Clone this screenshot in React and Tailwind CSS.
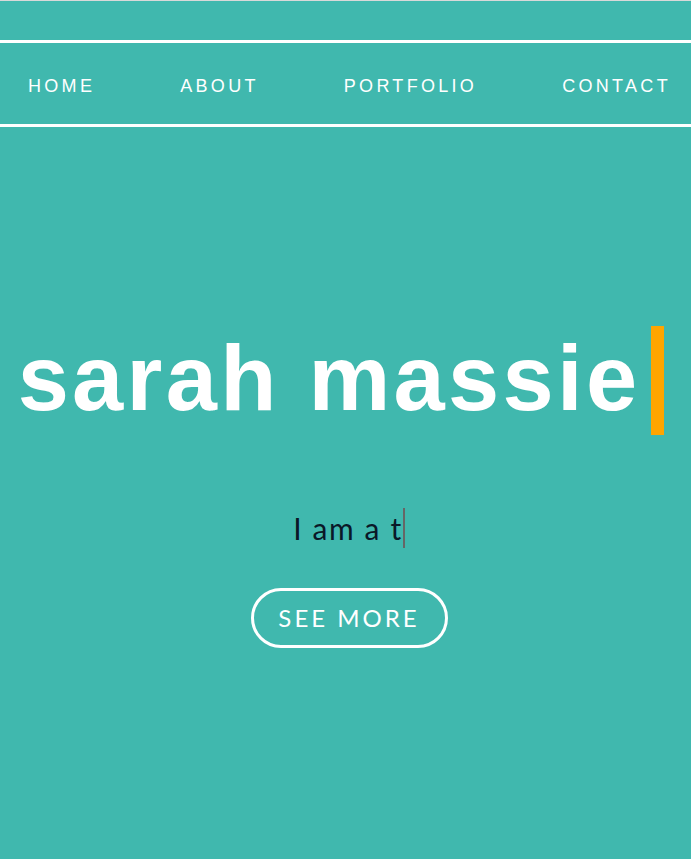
export default function App() {
  const navItems = ["HOME", "ABOUT", "PORTFOLIO", "CONTACT"];
  return (
    <div className="w-full h-[859px] bg-[#40b8ae] overflow-hidden">
      <div className="h-[40px] border-t border-[#d9d9d9]" />
      <nav className="h-[87px] border-y-[3px] border-white flex justify-between items-start pl-[28px] pr-[20px] pt-[34px] font-['Liberation_Sans',Arial,sans-serif] text-[18px] leading-[18px] tracking-[3.3px] text-white">
        {navItems.map((n) => (
          <a key={n} className="block">{n}</a>
        ))}
      </nav>
      <section className="flex flex-col items-center">
        <div className="mt-[199px] flex items-start justify-center w-full pr-[9px]">
          <h1 className="font-['Liberation_Sans',Arial,sans-serif] font-bold text-[92px] leading-[104px] tracking-[3.3px] text-white">
            sarah massie
          </h1>
          <span className="block w-[13px] h-[109px] bg-[#ffa500] ml-[11px]" />
        </div>
        <div className="mt-[73px] ml-[7px] flex items-start">
          <p className="font-['Lato','Noto_Sans',sans-serif] text-[30px] leading-[40px] text-[#0a1828] tracking-[1.6px]">
            I am a t
          </p>
          <span className="block w-[2px] h-[40px] bg-[#666666]" />
        </div>
        <button className="mt-[40px] ml-[7px] w-[197px] h-[60px] rounded-full border-[3px] border-white text-white font-['Lato','Noto_Sans',sans-serif] text-[24px] tracking-[3px] flex items-center justify-center">
          SEE MORE
        </button>
      </section>
    </div>
  );
}
